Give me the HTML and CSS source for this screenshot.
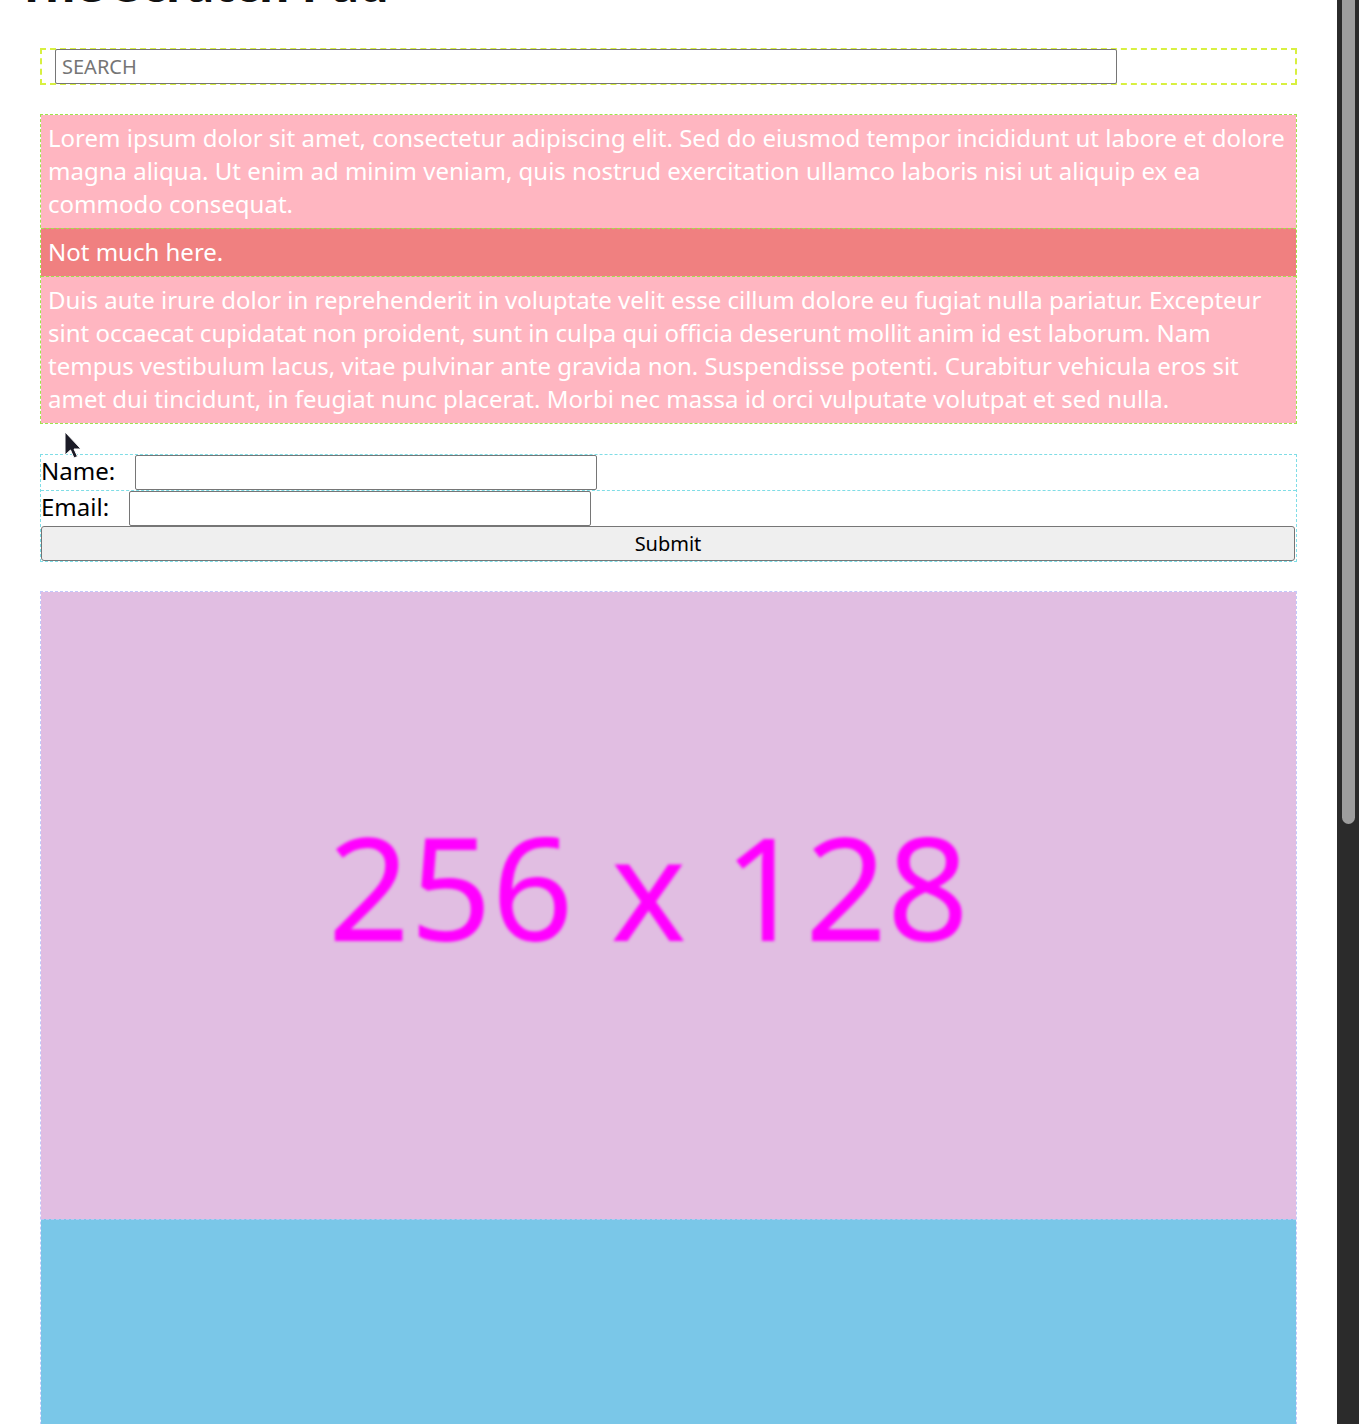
FILE: index.html
```html
<!DOCTYPE html>
<html lang="en">
<head>
<meta charset="utf-8">
<title>The Scratch Pad</title>
<link rel="stylesheet" href="styles.css">
</head>
<body>
<div class="page">
  <h1 class="title">The Scratch Pad</h1>
  <div class="search-box"><input class="search" type="text" placeholder="SEARCH"></div>
  <div class="texts">
    <p class="txt">Lorem ipsum dolor sit amet, consectetur adipiscing elit. Sed do eiusmod tempor incididunt ut labore et dolore magna aliqua. Ut enim ad minim veniam, quis nostrud exercitation ullamco laboris nisi ut aliquip ex ea commodo consequat.</p>
    <p class="txt alt">Not much here.</p>
    <p class="txt">Duis aute irure dolor in reprehenderit in voluptate velit esse cillum dolore eu fugiat nulla pariatur. Excepteur sint occaecat cupidatat non proident, sunt in culpa qui officia deserunt mollit anim id est laborum. Nam tempus vestibulum lacus, vitae pulvinar ante gravida non. Suspendisse potenti. Curabitur vehicula eros sit amet dui tincidunt, in feugiat nunc placerat. Morbi nec massa id orci vulputate volutpat et sed nulla.</p>
  </div>
  <form class="form">
    <div class="row first"><label class="lbl">Name:</label><input class="field" type="text"></div>
    <div class="row"><label class="lbl">Email:</label><input class="field" type="text"></div>
    <button class="submit" type="button">Submit</button>
  </form>
  <div class="media">
    <div class="ph"><span class="ph-text">256 x 128</span></div>
    <div class="blue"></div>
  </div>
</div>
<div class="scrollbar"><div class="thumb"></div></div>
<svg class="cursor" width="20" height="30" viewBox="0 0 20 30"><path d="M1 1 L1 24 L6.5 19 L10 27 L13.5 25.5 L10 18 L17 18 Z" fill="#1b1b26" stroke="#ffffff" stroke-width="1"/></svg>
</body>
</html>
```
FILE: styles.css
```css
html, body {
  margin: 0;
  padding: 0;
  overflow: hidden;
  background: #ffffff;
}
body {
  font-family: "Noto Sans", "Open Sans", sans-serif;
  width: 1359px;
  height: 1424px;
}
.page {
  width: 1337px;
  box-sizing: border-box;
  padding: 0 40px;
  display: flex;
  flex-direction: column;
  gap: 29px;
}
.title {
  margin: -45px 0 6px -22px;
  font-size: 47px;
  line-height: 58px;
  height: 58px;
  font-weight: 700;
  color: #111111;
  white-space: nowrap;
}
.search-box {
  border: 2px dashed #d8f040;
  height: 33px;
  padding: 0 13px;
  display: flex;
}
.search {
  width: 1062px;
  height: 35px;
  margin: -1px 0;
  box-sizing: border-box;
  border: 1px solid #767676;
  border-radius: 2px;
  padding: 0 6px;
  font-family: "Noto Sans", sans-serif;
  font-size: 20px;
  color: #222;
  outline: none;
  background: #fff;
}
.search::placeholder {
  color: #757575;
}
.texts {
  border: 1px dashed #9fe34a;
  display: flex;
  flex-direction: column;
  margin-bottom: 1px;
}
.txt {
  margin: 0;
  padding: 6px 7px 8px;
  background: #ffb6c1;
  color: #ffffff;
  font-size: 24px;
  line-height: 33px;
}
.txt + .txt {
  border-top: 1px dashed #9fe34a;
}
.txt.alt {
  background: #f08080;
}
.form {
  margin: 0;
  border: 1px dashed #7fdde6;
  display: flex;
  flex-direction: column;
}
.row {
  display: flex;
  align-items: center;
  height: 35px;
}
.row.first {
  border-bottom: 1px dashed #7fdde6;
}
.lbl {
  font-size: 24px;
  color: #000;
  margin: -4px 20px 0 0;
}
.field {
  width: 462px;
  height: 35px;
  box-sizing: border-box;
  border: 1px solid #767676;
  border-radius: 2px;
  margin: 0;
  background: #fff;
}
.submit {
  height: 35px;
  margin: 0 1px 0 0;
  border: 1px solid #767676;
  border-radius: 3px;
  background: #efefef;
  font-family: "Noto Sans", sans-serif;
  font-size: 20px;
  color: #000;
}
.media {
  border: 1px dashed #c3c8fb;
  border-bottom: none;
  display: flex;
  flex-direction: column;
}
.ph {
  height: 627px;
  background: #e1bee2;
  display: flex;
  align-items: center;
  justify-content: center;
  padding: 0 40px 40px 0;
  box-sizing: border-box;
  overflow: hidden;
}
.ph-text {
  font-size: 143px;
  line-height: 1;
  color: #ff00ff;
  filter: blur(1.4px);
}
.blue {
  height: 500px;
  background: #7ac7e8;
  border-top: 1px dashed #b4c8f5;
}
.scrollbar {
  position: fixed;
  top: 0;
  right: 0;
  width: 22px;
  height: 1424px;
  background: #2b2b2b;
}
.thumb {
  position: absolute;
  left: 5px;
  top: -20px;
  width: 13px;
  height: 844px;
  border-radius: 7px;
  background: #9e9e9e;
}
.cursor {
  position: absolute;
  left: 64px;
  top: 431px;
}
```
